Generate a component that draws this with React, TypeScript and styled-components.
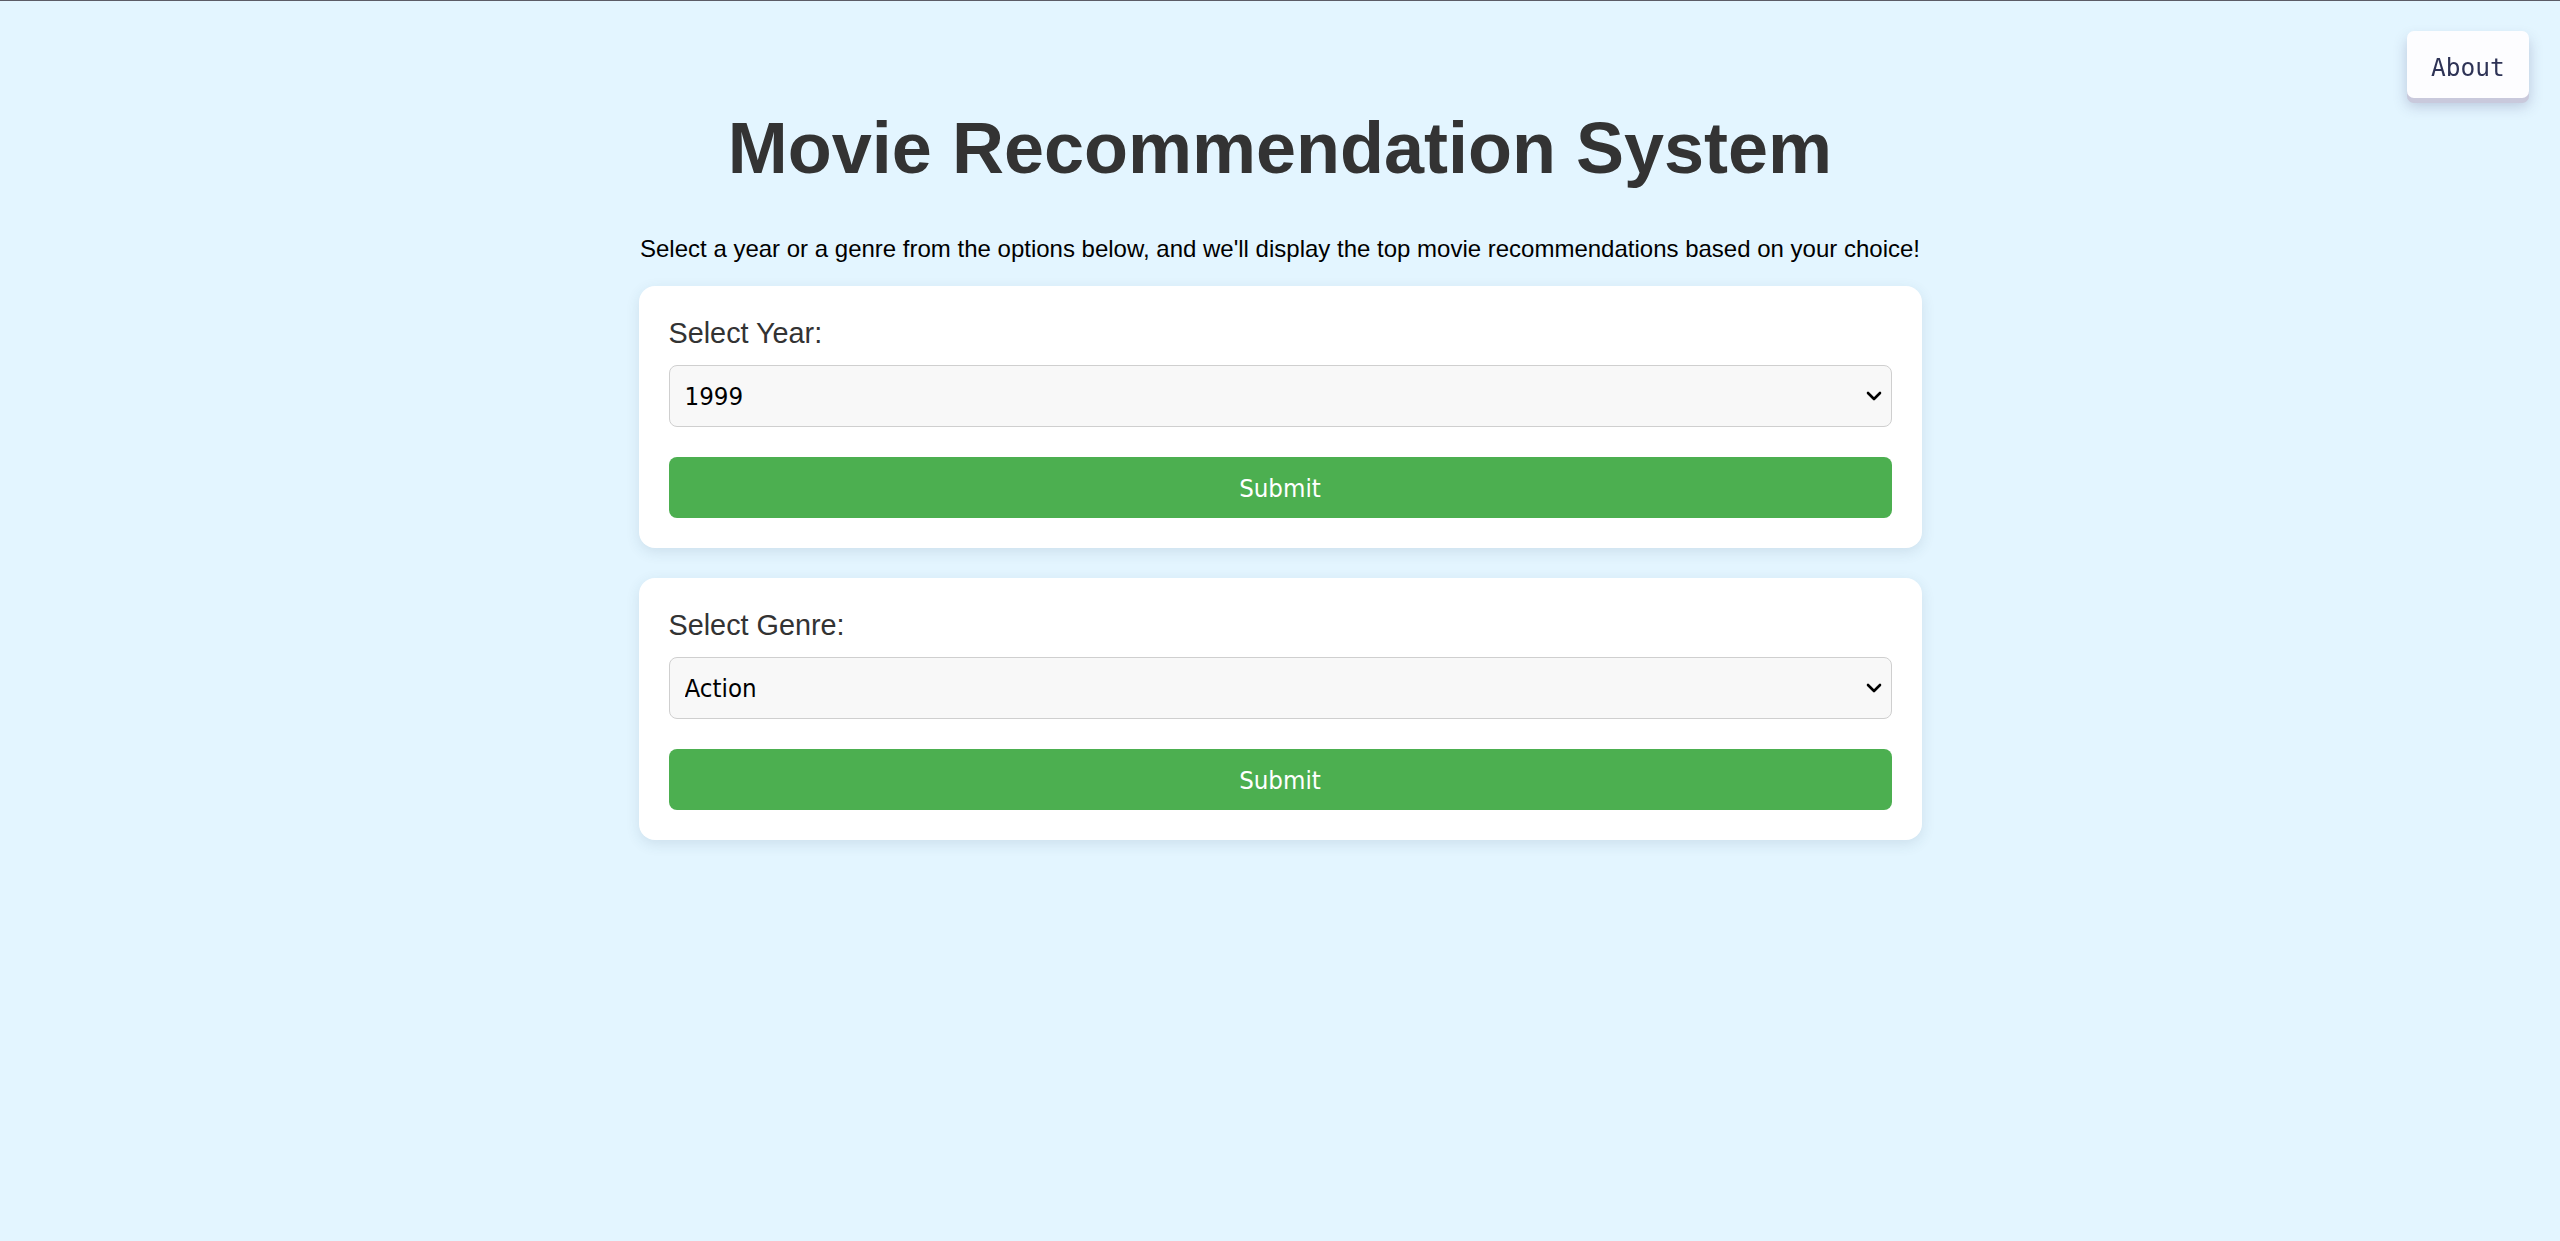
import styled, { createGlobalStyle } from "styled-components";
import { ChevronDown } from "lucide-react";

const GlobalStyle = createGlobalStyle`
  html, body {
    margin: 0;
    padding: 0;
    background: #e3f5ff;
  }
  body {
    border-top: 1px solid #5c5c66;
    min-height: 1240px;
    font-family: "Liberation Sans", Arial, sans-serif;
  }
`;

const Page = styled.div`
  display: flex;
  justify-content: center;
  padding-top: 107px;
`;

const AboutButton = styled.button`
  position: fixed;
  top: 31px;
  right: 31px;
  width: 122px;
  height: 67px;
  border: none;
  border-radius: 7px;
  background: #fdfdff;
  color: #2e3356;
  font-family: "DejaVu Sans Mono", "Liberation Mono", monospace;
  font-size: 24.5px;
  padding-top: 6px;
  box-shadow: 0 5px 0 #c9c9dc, 0 8px 14px rgba(60, 60, 110, 0.25);
  cursor: pointer;
`;

const Main = styled.main`
  width: 1283px;
  display: flex;
  flex-direction: column;
  align-items: center;
`;

const Title = styled.h1`
  margin: 0 0 48px;
  font-family: "Liberation Sans", Arial, sans-serif;
  font-size: 72px;
  line-height: 80px;
  font-weight: 700;
  color: #333;
  white-space: nowrap;
`;

const Intro = styled.p`
  margin: 0 0 25px;
  font-family: "Liberation Sans Narrow", "Liberation Sans", Arial, sans-serif;
  font-size: 24px;
  line-height: 25px;
  color: #000;
  white-space: nowrap;
`;

const Card = styled.section`
  align-self: stretch;
  box-sizing: border-box;
  display: flex;
  flex-direction: column;
  padding: 31px 30px 30px;
  margin-bottom: 30px;
  background: #fff;
  border-radius: 16px;
  box-shadow: 0 4px 14px rgba(40, 70, 100, 0.12);
`;

const Label = styled.label`
  display: block;
  margin-bottom: 16px;
  font-family: "Liberation Sans Narrow", "Liberation Sans", Arial, sans-serif;
  font-size: 28.8px;
  line-height: 32px;
  color: #333;
`;

const SelectWrap = styled.div`
  position: relative;
  margin-bottom: 30px;
`;

const Select = styled.select`
  appearance: none;
  width: 100%;
  height: 62px;
  box-sizing: border-box;
  padding: 0 40px 0 15px;
  border: 1.6px solid #cfcfcf;
  border-radius: 8px;
  background: #f8f8f8;
  color: #000;
  font-family: "DejaVu Sans Condensed", "DejaVu Sans", sans-serif;
  font-stretch: condensed;
  font-size: 25.6px;
  outline: none;
`;

const Arrow = styled.span`
  position: absolute;
  right: 6px;
  top: 50%;
  transform: translateY(-50%);
  display: flex;
  pointer-events: none;
  color: #000;
`;

const SubmitButton = styled.button`
  width: 100%;
  height: 61px;
  border: none;
  border-radius: 8px;
  background: #4caf50;
  color: #fff;
  font-family: "DejaVu Sans Condensed", "DejaVu Sans", sans-serif;
  font-stretch: condensed;
  font-size: 25.6px;
  cursor: pointer;
`;

const years = ["1999", "2000", "2001", "2002", "2003", "2004", "2005"];
const genres = ["Action", "Comedy", "Drama", "Horror", "Romance", "Thriller"];

const ChoiceCard = ({ id, label, options }: { id: string; label: string; options: string[] }) => (
  <Card>
    <Label htmlFor={id}>{label}</Label>
    <SelectWrap>
      <Select id={id} defaultValue={options[0]}>
        {options.map((o) => (
          <option key={o} value={o}>
            {o}
          </option>
        ))}
      </Select>
      <Arrow>
        <ChevronDown size={24} strokeWidth={2.6} />
      </Arrow>
    </SelectWrap>
    <SubmitButton type="button">Submit</SubmitButton>
  </Card>
);

export default function App() {
  return (
    <>
      <GlobalStyle />
      <AboutButton type="button">About</AboutButton>
      <Page>
        <Main>
          <Title>Movie Recommendation System</Title>
          <Intro>
            Select a year or a genre from the options below, and we'll display the top movie recommendations based on your choice!
          </Intro>
          <ChoiceCard id="year" label="Select Year:" options={years} />
          <ChoiceCard id="genre" label="Select Genre:" options={genres} />
        </Main>
      </Page>
    </>
  );
}
